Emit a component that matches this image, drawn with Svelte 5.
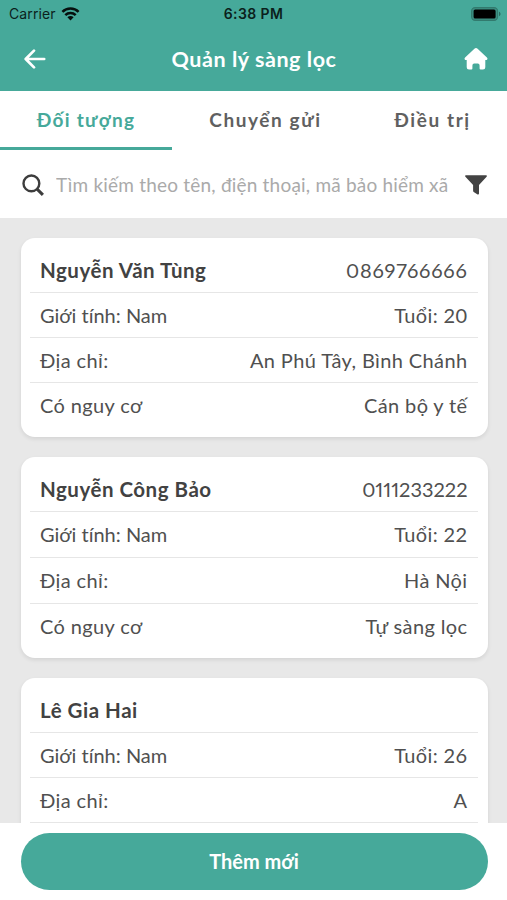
<script>
  const tabs = ["Đối tượng", "Chuyển gửi", "Điều trị"];
  let activeTab = 0;
  let search = "";

  const patients = [
    {
      name: "Nguyễn Văn Tùng",
      phone: "0869766666",
      gender: "Nam",
      age: 20,
      address: "An Phú Tây, Bình Chánh",
      risk: "Cán bộ y tế",
    },
    {
      name: "Nguyễn Công Bảo",
      phone: "0111233222",
      gender: "Nam",
      age: 22,
      address: "Hà Nội",
      risk: "Tự sàng lọc",
      tall: true,
    },
    {
      name: "Lê Gia Hai",
      phone: "",
      gender: "Nam",
      age: 26,
      address: "A",
      risk: "",
    },
  ];

  const selectTab = (i) => {
    activeTab = i;
  };
</script>

<div class="screen">
  <header>
    <div class="status-bar">
      <div class="carrier">
        <span>Carrier</span>
        <svg class="wifi" viewBox="0 0 18 14" width="19" height="14">
          <g fill="none" stroke="#06100e" stroke-width="2.5">
            <path d="M0.9 4.9a11.5 11.5 0 0 1 16.2 0" />
            <path d="M3.8 8.1a7.4 7.4 0 0 1 10.4 0" />
          </g>
          <path d="M9 13.4L5.9 10.3a4.4 4.4 0 0 1 6.2 0z" fill="#06100e" />
        </svg>
      </div>
      <span class="time">6:38 PM</span>
      <svg class="battery" viewBox="0 0 30 14" width="30" height="14">
        <rect x="0.6" y="0.6" width="26" height="12.8" rx="3.6" fill="#3c8f82" stroke="#327a6e" stroke-width="1.1" />
        <rect x="2.6" y="2.5" width="22" height="9" rx="1.6" fill="#000" />
        <path d="M28 4.8c2 .7 2 3.7 0 4.4z" fill="#2b6d62" />
      </svg>
    </div>
    <div class="title-bar">
      <button class="back" aria-label="Back">
        <svg viewBox="0 0 22 20" width="22" height="20">
          <path
            d="M20.2 10H2M10 1.6L1.7 10L10 18.4"
            fill="none"
            stroke="#fff"
            stroke-width="2.7"
            stroke-linecap="round"
            stroke-linejoin="round"
          />
        </svg>
      </button>
      <h1>Quản lý sàng lọc</h1>
      <button class="home" aria-label="Home">
        <svg viewBox="0 0 24 22" width="24" height="22">
          <path
            d="M10.4.8a2.3 2.3 0 0 1 3.2 0l9.3 8.7c1.1 1.1.6 2.5-.8 2.5h-.8v7.3a2.3 2.3 0 0 1-2.3 2.3h-2.4a1 1 0 0 1-1-1v-3.2a1.8 1.8 0 0 0-1.8-1.8h-3.6a1.8 1.8 0 0 0-1.8 1.8v3.2a1 1 0 0 1-1 1H5a2.3 2.3 0 0 1-2.3-2.3V12h-.8c-1.4 0-1.9-1.4-.8-2.5z"
            fill="#fff"
          />
        </svg>
      </button>
    </div>
  </header>

  <nav>
    {#each tabs as tab, i}
      <button
        class={`tab tab-${i}${activeTab === i ? " tab-active" : ""}`}
        on:click={() => selectTab(i)}>{tab}</button
      >
    {/each}
  </nav>

  <div class="search">
    <svg viewBox="0 0 22 22" width="22" height="22">
      <circle cx="9.4" cy="9.4" r="7.9" fill="none" stroke="#3d3d3d" stroke-width="2.4" />
      <path d="M15.1 15.1L20.9 20.9" stroke="#3d3d3d" stroke-width="3" />
    </svg>
    <input
      bind:value={search}
      type="text"
      aria-label="search"
      placeholder="Tìm kiếm theo tên, điện thoại, mã bảo hiểm xã"
    />
    <svg viewBox="0 0 22 20" width="22" height="20">
      <path
        d="M.9.2h20.2c.8 0 1.1.9.5 1.5L14 10v8.6c0 .8-.7 1.2-1.4.8l-3.9-2.5a1.4 1.4 0 0 1-.6-1.1V10L.4 1.7C-.2 1.1.1.2.9.2z"
        fill="#434343"
      />
    </svg>
  </div>

  <main>
    {#each patients as patient}
      <div class={`card${patient.tall ? " card-tall" : ""}`}>
        <div class="row">
          <strong>{patient.name}</strong>
          <span class={`phone${patient.phone.includes("111") ? " phone-tight" : ""}`}
            >{patient.phone}</span
          >
        </div>
        <div class="row">
          <span class="gender">Giới tính: {patient.gender}</span>
          <span>Tuổi: {patient.age}</span>
        </div>
        <div class="row">
          <span>Địa chỉ:</span>
          <span>{patient.address}</span>
        </div>
        {#if patient.risk}
          <div class="row row-risk">
            <span>Có nguy cơ</span>
            <span>{patient.risk}</span>
          </div>
        {/if}
      </div>
    {/each}
  </main>

  <footer>
    <button class="add">Thêm mới</button>
  </footer>
</div>

<style>
  :global(body) {
    margin: 0;
    overflow: hidden;
  }

  .screen {
    width: 507px;
    height: 900px;
    display: flex;
    flex-direction: column;
    overflow: hidden;
    background-color: #fff;
    color: #505050;
    font-family: Lato, "Noto Sans", sans-serif;
    font-size: 20px;
  }

  button {
    border: 0;
    padding: 0;
    background: none;
    font-family: inherit;
    color: inherit;
  }

  svg {
    display: block;
    flex: none;
  }

  header {
    flex: none;
    height: 91px;
    background-color: #46a99a;
  }

  .status-bar {
    height: 27px;
    display: grid;
    grid-template-columns: 1fr auto 1fr;
    align-items: center;
    padding: 0 6px;
    box-sizing: border-box;
    font-family: Inter, sans-serif;
    font-size: 14px;
    color: #0b1f1c;
  }

  .carrier {
    display: flex;
    align-items: center;
    gap: 5px;
    padding-left: 3px;
    letter-spacing: 0.1px;
  }

  .time {
    font-weight: 600;
    letter-spacing: 0.4px;
  }

  .battery {
    justify-self: end;
  }

  .title-bar {
    height: 64px;
    display: grid;
    grid-template-columns: 29px 1fr 24px;
    align-items: center;
    padding: 0 19px 0 24px;
  }

  .back {
    justify-self: start;
  }

  .title-bar h1 {
    margin: 0 9px 0 0;
    text-align: center;
    font-size: 21.5px;
    font-weight: 700;
    letter-spacing: 0.55px;
    color: #fff;
    white-space: nowrap;
  }

  nav {
    flex: none;
    height: 59px;
    display: flex;
  }

  .tab {
    width: 172px;
    flex: none;
    padding-top: 1px;
    font-size: 19px;
    font-weight: 700;
    letter-spacing: 1.6px;
    color: #606060;
    border-bottom: 3px solid transparent;
  }

  .tab-0 {
    letter-spacing: 1.3px;
  }

  .tab-1 {
    width: 187px;
  }

  .tab-2 {
    width: 147px;
  }

  .tab-active {
    color: #46a99a;
    border-bottom-color: #46a99a;
  }

  .search {
    flex: none;
    height: 68px;
    display: flex;
    align-items: center;
    padding: 1px 20px 0 22px;
    box-sizing: border-box;
  }

  input {
    flex: 1;
    min-width: 0;
    margin: 0 15px 0 12px;
    padding: 0 0 1px;
    border: 0;
    outline: 0;
    font-family: inherit;
    font-size: 19px;
    letter-spacing: 0.2px;
    color: #505050;
  }

  input::placeholder {
    color: #aaa;
    opacity: 1;
  }

  main {
    flex: 1;
    min-height: 0;
    overflow: hidden;
    display: flex;
    flex-direction: column;
    gap: 20px;
    padding: 20px 19.5px 0 20.5px;
    background-color: #e8e8e8;
  }

  .card {
    flex: none;
    min-height: 199px;
    box-sizing: border-box;
    padding: 10px 9.5px 9px;
    border-radius: 14px;
    background-color: #fff;
    box-shadow: 0 2px 4px rgba(0, 0, 0, 0.09);
  }

  .row {
    height: 45px;
    display: flex;
    justify-content: space-between;
    align-items: center;
    box-sizing: border-box;
    padding: 0 10.5px 1px 10px;
    border-bottom: 1px solid #e6e6e6;
    letter-spacing: 0.38px;
    white-space: nowrap;
  }

  .row-risk {
    border-bottom-color: transparent;
  }

  .card-tall .row:nth-child(2),
  .card-tall .row:nth-child(3) {
    height: 46px;
  }

  strong {
    color: #424242;
    font-size: 20.5px;
    letter-spacing: 0.52px;
  }

  .phone {
    font-variant-numeric: proportional-nums;
    letter-spacing: 0.8px;
  }

  .phone-tight {
    letter-spacing: 0;
  }

  .gender {
    letter-spacing: 0;
    font-variant-ligatures: none;
  }

  footer {
    flex: none;
    height: 77px;
    padding: 10px 19.5px 10px 20.5px;
    box-sizing: border-box;
  }

  .add {
    width: 100%;
    height: 57px;
    padding-bottom: 2px;
    border-radius: 29px;
    background-color: #46a99a;
    color: #fff;
    font-size: 20px;
    font-weight: 700;
  }
</style>
